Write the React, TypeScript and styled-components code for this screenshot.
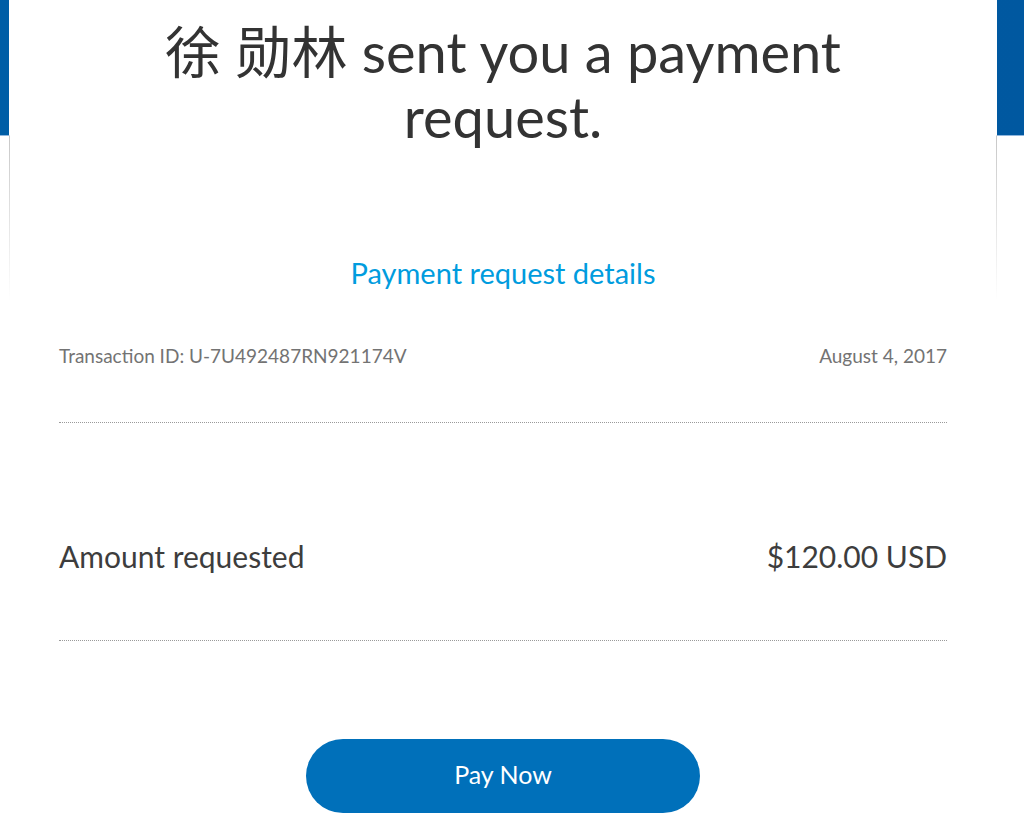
import React from "react";
import styled, { createGlobalStyle } from "styled-components";

const Global = createGlobalStyle`
  html, body { margin: 0; padding: 0; background: #ffffff; }
  body { font-family: Lato, "Noto Sans CJK SC", sans-serif; }
`;

const Page = styled.div`
  width: 1024px;
  height: 832px;
  overflow: hidden;
  background: #ffffff;
`;

const Band = styled.div`
  height: 135px;
  background: linear-gradient(to right, #005ea6, #0058a0);
  border-bottom: 1px solid #8fb6dd;
`;

const Card = styled.div`
  margin: -136px 0 0 9px;
  width: 988px;
  box-sizing: border-box;
  background: #ffffff;
`;

const Top = styled.section`
  border-left: 1px solid transparent;
  border-right: 1px solid transparent;
  border-image: linear-gradient(
      to bottom,
      rgba(200, 200, 200, 0) 0,
      rgba(200, 200, 200, 0) 135px,
      rgba(200, 200, 200, 1) 136px,
      rgba(200, 200, 200, 0) 300px
    )
    1;
  height: 300px;
  box-sizing: border-box;
  padding: 19px 50px 0;
  display: flex;
  flex-direction: column;
  align-items: center;
`;

const Heading = styled.h1`
  margin: 0;
  font-weight: 400;
  font-size: 56px;
  line-height: 65px;
  color: #333333;
  text-align: center;
  width: 760px;
`;

const DetailsLink = styled.a`
  margin-top: 106px;
  font-size: 29px;
  line-height: 36px;
  color: #009cde;
  text-decoration: none;
`;

const Body = styled.section`
  padding: 44px 50px 0;
  display: flex;
  flex-direction: column;
`;

const Row = styled.div<{ $big?: boolean }>`
  display: flex;
  justify-content: space-between;
  align-items: baseline;
  font-size: ${(p) => (p.$big ? "30px" : "19px")};
  line-height: ${(p) => (p.$big ? "36px" : "24px")};
  color: ${(p) => (p.$big ? "#3d3d3d" : "#737373")};
`;

const Divider = styled.hr<{ $top: number; $bottom: number }>`
  margin: ${(p) => p.$top}px 0 ${(p) => p.$bottom}px;
  border: 0;
  border-top: 1px dotted #9a9a9a;
  height: 0;
`;

const Actions = styled.div`
  display: flex;
  justify-content: center;
  padding-top: 98px;
`;

const PayButton = styled.button`
  width: 394px;
  height: 74px;
  padding: 0 0 5px;
  border: 0;
  border-radius: 37px;
  background: #0070ba;
  color: #ffffff;
  font-family: Lato, "Noto Sans CJK SC", sans-serif;
  font-size: 25px;
  cursor: pointer;
`;

export default function App() {
  return (
    <Page>
      <Global />
      <Band />
      <Card>
        <Top>
          <Heading>徐 勋林 sent you a payment request.</Heading>
          <DetailsLink href="#">Payment request details</DetailsLink>
        </Top>
        <Body>
          <Row>
            <span>Transaction ID: U-7U492487RN921174V</span>
            <span>August 4, 2017</span>
          </Row>
          <Divider $top={54} $bottom={115} />
          <Row $big>
            <span>Amount requested</span>
            <span>$120.00 USD</span>
          </Row>
          <Divider $top={66} $bottom={0} />
          <Actions>
            <PayButton>Pay Now</PayButton>
          </Actions>
        </Body>
      </Card>
    </Page>
  );
}
